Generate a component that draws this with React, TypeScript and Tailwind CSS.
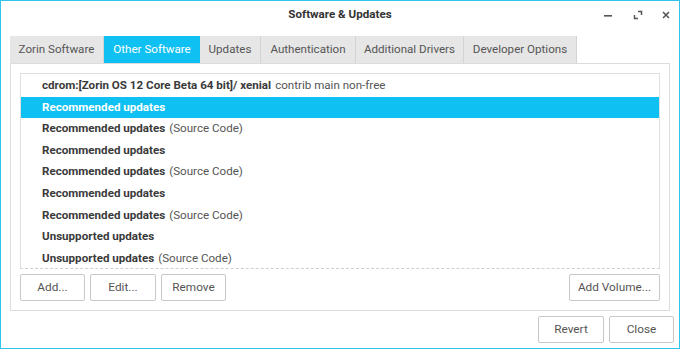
import React from "react";

const rows: { b: string; n?: string; sel?: boolean }[] = [
  { b: "cdrom:[Zorin OS 12 Core Beta 64 bit]/ xenial", n: "contrib main non-free" },
  { b: "Recommended updates", sel: true },
  { b: "Recommended updates", n: "(Source Code)" },
  { b: "Recommended updates" },
  { b: "Recommended updates", n: "(Source Code)" },
  { b: "Recommended updates" },
  { b: "Recommended updates", n: "(Source Code)" },
  { b: "Unsupported updates" },
  { b: "Unsupported updates", n: "(Source Code)" },
];

const tabs = [
  { t: "Zorin Software", w: 94 },
  { t: "Other Software", w: 96, active: true },
  { t: "Updates", w: 61 },
  { t: "Authentication", w: 95 },
  { t: "Additional Drivers", w: 108 },
  { t: "Developer Options", w: 113 },
];

function Btn({ children, w }: { children: React.ReactNode; w: string }) {
  return (
    <button
      className={`${w} h-[27px] border border-[#c8c8c8] rounded-[2px] bg-white text-[11.8px] text-[#555] flex items-center justify-center`}
    >
      {children}
    </button>
  );
}

export default function App() {
  return (
    <div
      className="w-[680px] h-[349px] border border-[#2ec4ee] bg-white flex flex-col overflow-hidden"
      style={{ fontFamily: "Roboto, 'Noto Sans', sans-serif" }}
    >
      <div className="relative h-[35px] shrink-0 flex items-center justify-center">
        <span className="text-[11.6px] font-bold text-[#333] -mt-[8px]">Software &amp; Updates</span>
        <div className="absolute right-0 top-0 h-[28px] flex items-center">
          <svg width="10" height="10" viewBox="0 0 10 10" className="absolute left-[-76px] top-[9px]">
            <rect x="1" y="5" width="8" height="1.6" fill="#555" />
          </svg>
          <svg width="10" height="10" viewBox="0 0 10 10" className="absolute left-[-46px] top-[9px]">
            <path d="M5 1.5H8.5V5M1.5 5V8.5H5" stroke="#555" strokeWidth="1.5" fill="none" />
          </svg>
          <svg width="10" height="10" viewBox="0 0 10 10" className="absolute left-[-18px] top-[9px]">
            <path d="M2 2L8 8M8 2L2 8" stroke="#555" strokeWidth="1.6" fill="none" />
          </svg>
        </div>
      </div>
      <div className="flex ml-[9px] h-[27px] shrink-0">
        {tabs.map((t, i) => (
          <div
            key={i}
            style={{ width: t.w }}
            className={`h-full flex items-center justify-center text-[11.6px] ${
              t.active
                ? "bg-[#0fc1f2] text-white"
                : "bg-[#e6e6e6] text-[#555] border-r border-[#d4d4d4]"
            }`}
          >
            {t.t}
          </div>
        ))}
      </div>
      <div className="mx-[9px] w-[660px] h-[248px] shrink-0 border border-[#dcdcdc] p-[9px] flex flex-col">
        <div
          className="h-[196px] shrink-0 border border-[#e0e0e0] border-b-[#cfcfcf] pt-[1px] overflow-hidden"
          style={{ borderBottomStyle: "dashed" }}
        >
          {rows.map((r, i) => (
            <div
              key={i}
              className={`h-[21.6px] flex items-center pl-[21px] text-[11.6px] ${
                r.sel ? "bg-[#0fc1f2] text-white" : "text-[#555]"
              }`}
            >
              <span className={`font-bold ${r.sel ? "text-white" : "text-[#3a3a3a]"}`}>{r.b}</span>
              {r.n && <span className="ml-[4px]">{r.n}</span>}
            </div>
          ))}
        </div>
        <div className="flex mt-[5px] gap-[5px]">
          <Btn w="w-[65px]">Add...</Btn>
          <Btn w="w-[66px]">Edit...</Btn>
          <Btn w="w-[65px]">Remove</Btn>
          <div className="flex-1" />
          <Btn w="w-[91px]">Add Volume...</Btn>
        </div>
      </div>
      <div className="flex justify-end gap-[5px] mr-[5px] mt-[5px]">
        <Btn w="w-[66px]">Revert</Btn>
        <Btn w="w-[65px]">Close</Btn>
      </div>
    </div>
  );
}
